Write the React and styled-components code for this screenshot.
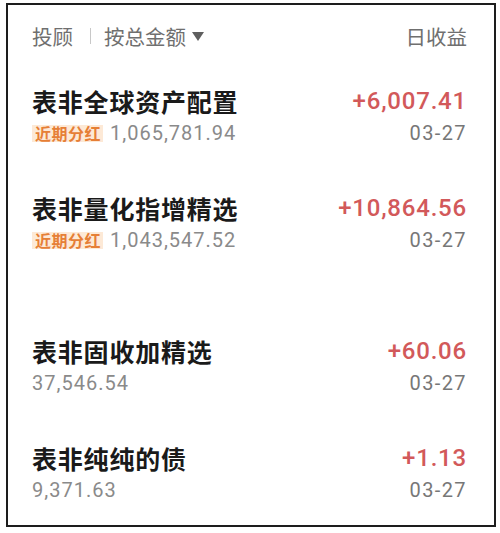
import React from 'react';
import styled, {createGlobalStyle} from 'styled-components';

const GlobalStyle = createGlobalStyle`
    body {
        margin: 0;
        background: #ffffff;
        font-family: "Noto Sans CJK SC", "Noto Sans", sans-serif;
    }
`;

const Frame = styled.div`
    box-sizing: border-box;
    width: 490px;
    height: 524px;
    margin: 3px 0 0 6px;
    border: 2px solid #1d1d1d;
    background: #fff;
    padding: 17px 27px 0 24px;
    display: flex;
    flex-direction: column;
`;

const Header = styled.div`
    display: flex;
    align-items: center;
    justify-content: space-between;
    height: 28px;
    font-size: 20.5px;
    color: #6f6f6f;
`;

const HeaderLeft = styled.div`
    display: flex;
    align-items: center;
`;

const Divider = styled.span`
    width: 1px;
    height: 16px;
    background: #c8c8c8;
    margin: 0 13px 0 17px;
`;

const Caret = styled.span`
    width: 0;
    height: 0;
    margin-left: 6px;
    border-left: 6px solid transparent;
    border-right: 6px solid transparent;
    border-top: 9px solid #5f5f5f;
`;

const Row = styled.div`
    display: flex;
    justify-content: space-between;
    margin-top: ${p => p.$gap}px;
`;

const Col = styled.div`
    display: flex;
    flex-direction: column;
    align-items: ${p => (p.$right ? 'flex-end' : 'flex-start')};
`;

const Title = styled.div`
    height: 32px;
    line-height: 32px;
    font-size: 25px;
    font-weight: 700;
    color: #1a1a1a;
    letter-spacing: 0.8px;
`;

const SubLine = styled.div`
    display: flex;
    align-items: center;
    height: 32px;
`;

const Tag = styled.span`
    font-size: 16px;
    font-weight: 700;
    line-height: 17px;
    padding: 0 2px 0 3px;
    margin-right: 7px;
    color: #e67f36;
    background: #fde9d6;
    letter-spacing: 0.5px;
`;

const Amount = styled.span`
    font-family: Roboto, "Liberation Sans", sans-serif;
    font-size: 20px;
    color: #8a8a8a;
    letter-spacing: 1px;
`;

const Gain = styled.div`
    height: 32px;
    line-height: 32px;
    font-family: Roboto, "Liberation Sans", sans-serif;
    font-size: 24px;
    font-weight: 500;
    color: #d2595a;
    letter-spacing: 0.8px;
`;

const DateText = styled.div`
    height: 32px;
    line-height: 32px;
    font-family: Roboto, "Liberation Sans", sans-serif;
    font-size: 20px;
    color: #777;
    letter-spacing: 1.4px;
`;

const funds = [
    {name: '表非全球资产配置', amount: '1,065,781.94', gain: '+6,007.41', date: '03-27', tag: true, gap: 35},
    {name: '表非量化指增精选', amount: '1,043,547.52', gain: '+10,864.56', date: '03-27', tag: true, gap: 43},
    {name: '表非固收加精选', amount: '37,546.54', gain: '+60.06', date: '03-27', tag: false, gap: 79},
    {name: '表非纯纯的债', amount: '9,371.63', gain: '+1.13', date: '03-27', tag: false, gap: 43},
];

const FundRow = ({fund}) => (
    <Row $gap={fund.gap}>
        <Col>
            <Title>{fund.name}</Title>
            <SubLine>
                {fund.tag && <Tag>近期分红</Tag>}
                <Amount>{fund.amount}</Amount>
            </SubLine>
        </Col>
        <Col $right>
            <Gain>{fund.gain}</Gain>
            <DateText>{fund.date}</DateText>
        </Col>
    </Row>
);

export default function App() {
    return (
        <>
            <GlobalStyle/>
            <Frame>
                <Header>
                    <HeaderLeft>
                        <span>投顾</span>
                        <Divider/>
                        <span>按总金额</span>
                        <Caret/>
                    </HeaderLeft>
                    <span>日收益</span>
                </Header>
                {funds.map(f => <FundRow key={f.name} fund={f}/>)}
            </Frame>
        </>
    );
}
